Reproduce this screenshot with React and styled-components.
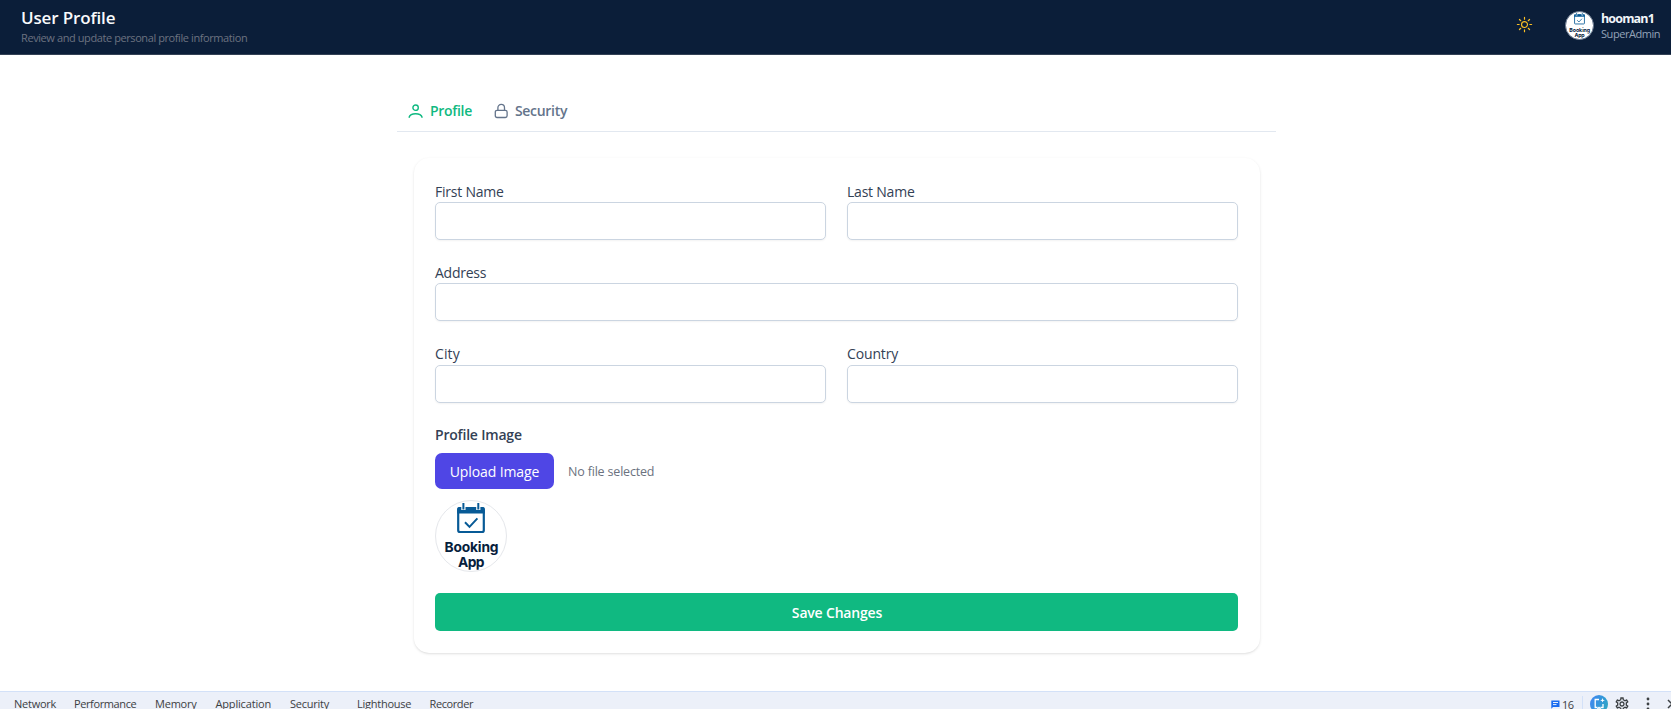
import React from "react";
import styled, { createGlobalStyle } from "styled-components";
import { HiOutlineSun } from "react-icons/hi2";
import { MdOutlineSettings } from "react-icons/md";

const GlobalStyle = createGlobalStyle`
  *, *::before, *::after { box-sizing: border-box; }
  body {
    margin: 0;
    background: #fff;
    font-family: "Open Sans", "Noto Sans", sans-serif;
    overflow: hidden;
  }
  svg { display: block; flex-shrink: 0; }
`;

const Page = styled.div`
  display: flex;
  flex-direction: column;
  height: 709px;
  overflow: hidden;
`;

const Header = styled.header`
  display: flex;
  justify-content: space-between;
  flex: 0 0 55px;
  padding: 0 11px 0 21px;
  background: #0b1e39;
  border-bottom: 1px solid #334155;
`;

const Heading = styled.div`
  padding-top: 6px;
`;

const Title = styled.h1`
  margin: 0;
  font-size: 17px;
  font-weight: 600;
  line-height: 24px;
  letter-spacing: -0.14px;
  color: #f8fafc;
`;

const Subtitle = styled.p`
  margin: 0;
  font-size: 11px;
  line-height: 16px;
  letter-spacing: -0.41px;
  color: #6b7280;
`;

const HeaderActions = styled.div`
  display: flex;
  align-items: flex-start;
`;

const ThemeToggle = styled.button`
  display: flex;
  margin: 15px 31px 0 0;
  padding: 0;
  border: 0;
  background: none;
  color: #fbbf24;
`;

const Avatar = styled.div`
  width: ${(p) => p.$size}px;
  height: ${(p) => p.$size}px;
  flex-shrink: 0;
  border: 1px solid ${(p) => p.$border};
  border-radius: 50%;
  background: #fff;
  overflow: hidden;
`;

const HeaderAvatar = styled(Avatar)`
  margin: 11px 7px 0 0;
`;

const UserInfo = styled.div`
  width: 59px;
  padding-top: 11px;
  white-space: nowrap;
`;

const UserName = styled.div`
  font-size: 12.5px;
  font-weight: 700;
  line-height: 16px;
  letter-spacing: -0.85px;
  color: #f1f5f9;
`;

const UserRole = styled.div`
  font-size: 11px;
  line-height: 14px;
  letter-spacing: -0.45px;
  color: #94a3b8;
`;

const Main = styled.main`
  flex: 1 1 0;
  min-height: 0;
  padding: 38px 0 0 397px;
`;

const Tabs = styled.nav`
  display: flex;
  align-items: flex-start;
  gap: 22px;
  width: 879px;
  height: 39px;
  padding: 7px 0 0 11px;
  border-bottom: 1px solid #e2e8f0;
`;

const Tab = styled.button`
  display: flex;
  align-items: center;
  gap: 6px;
  height: 22px;
  padding: 0;
  border: 0;
  background: none;
  font: 600 14px/22px "Open Sans", sans-serif;
  letter-spacing: -0.31px;
  color: ${(p) => (p.$active ? "#10b981" : "#64748b")};
`;

const Card = styled.form`
  width: 846px;
  height: 495px;
  margin: 26px 0 0 17px;
  padding: 23.75px 22px 22px 21px;
  border-radius: 15px;
  background: #fff;
  box-shadow: 0 1px 3px rgba(0, 0, 0, 0.1), 0 1px 2px -1px rgba(0, 0, 0, 0.1);
`;

const FieldGrid = styled.div`
  display: grid;
  grid-template-columns: 1fr 1fr;
  column-gap: 21px;
  row-gap: 22.85px;
`;

const Field = styled.label`
  display: flex;
  flex-direction: column;
  grid-column: ${(p) => (p.$wide ? "1 / -1" : "auto")};
  font-size: 14px;
  line-height: 20.4px;
  letter-spacing: ${(p) => p.$tracking}px;
  color: #334155;
`;

const Input = styled.input`
  width: 100%;
  height: 38px;
  padding: 0 12px;
  border: 1px solid #cbd5e1;
  border-radius: 5px;
  background: #fff;
  box-shadow: 0 1px 2px rgba(0, 0, 0, 0.05);
  outline: none;
`;

const GroupLabel = styled.div`
  margin-top: 22.35px;
  font-size: 14px;
  font-weight: 600;
  line-height: 20px;
  letter-spacing: -0.2px;
  color: #334155;
`;

const UploadRow = styled.div`
  display: flex;
  align-items: center;
  gap: 14px;
  margin-top: 8px;
`;

const UploadButton = styled.button`
  width: 119px;
  height: 36px;
  padding: 1px 0 0;
  border: 0;
  border-radius: 7px;
  background: #4f46e5;
  color: #fff;
  font: 500 14px/20px "Open Sans", sans-serif;
  letter-spacing: -0.1px;
`;

const FileStatus = styled.span`
  padding-top: 1px;
  font-size: 12.5px;
  line-height: 18px;
  letter-spacing: -0.18px;
  color: #6b7280;
`;

const ProfileAvatar = styled(Avatar)`
  margin-top: 11px;
`;

const SaveButton = styled.button`
  display: block;
  width: 100%;
  height: 38px;
  margin-top: 21px;
  padding: 2px 0 0 1px;
  border: 0;
  border-radius: 5px;
  background: #10b981;
  color: #fff;
  font: 600 14px/20px "Open Sans", sans-serif;
  letter-spacing: -0.18px;
`;

const DevBar = styled.footer`
  display: flex;
  justify-content: space-between;
  flex: 0 0 18px;
  padding-left: 14px;
  border-top: 1px solid #d3e1f8;
  background: #ecf0f9;
  overflow: hidden;
`;

const DevTabs = styled.div`
  display: flex;
  padding-top: 6px;
`;

const DevTab = styled.span`
  width: ${(p) => p.$slot}px;
  height: 11px;
  font-size: 11px;
  line-height: 11px;
  letter-spacing: ${(p) => p.$tracking}px;
  white-space: nowrap;
  color: #3c4043;
`;

const DevTools = styled.div`
  display: flex;
  align-items: center;
  width: 120px;
  height: 24px;

  > * {
    flex-shrink: 0;
  }
`;

const IssueCount = styled.span`
  width: 20px;
  margin-left: 2px;
  font-size: 11px;
  line-height: 11px;
  letter-spacing: -0.5px;
  color: #3c4043;
`;

const Divider = styled.span`
  width: 1px;
  height: 16px;
  margin-right: 7px;
  background: #d3e1f8;
`;

const AiBadge = styled.span`
  display: flex;
  align-items: center;
  justify-content: center;
  width: 18px;
  height: 18px;
  margin-right: 5px;
  border-radius: 50%;
  background: linear-gradient(115deg, #4285f4, #2f9ed0 70%, #35a8b8);
`;

const ToolIcon = styled.span`
  display: flex;
  margin-left: ${(p) => p.$gap}px;
  color: #3c4043;
`;

const BookingLogo = () => (
  <svg width="100%" height="100%" viewBox="0 0 70 70" role="img" aria-label="Booking App">
    <rect x="22.2" y="7.2" width="25.6" height="23.8" rx="1.8" fill="#fff" stroke="#075a96" strokeWidth="2.2" />
    <path d="M21.2 12.5V8a2 2 0 0 1 2-2h23.6a2 2 0 0 1 2 2v4.5z" fill="#075a96" />
    <path d="M27.4 1.5v7.5M42.3 1.5v7.5" stroke="#fff" strokeWidth="4.2" />
    <path d="M27.4 2v6.4M42.3 2v6.4" stroke="#075a96" strokeWidth="2" />
    <path d="M29 21.3l4.5 4.6 7.9-8.5" fill="none" stroke="#075a96" strokeWidth="2" />
    <text x="35.5" y="50.6" textAnchor="middle" textLength="54" fontFamily="Inter, sans-serif" fontSize="13.8" fontWeight="700" fill="#06203c">Booking</text>
    <text x="35.2" y="66" textAnchor="middle" textLength="26.6" fontFamily="Inter, sans-serif" fontSize="13.8" fontWeight="700" fill="#06203c">App</text>
  </svg>
);

const UserIcon = () => (
  <svg width="16" height="16" viewBox="0 0 16 16" fill="none" stroke="currentColor" strokeWidth="1.4" strokeLinecap="round">
    <circle cx="7.6" cy="4.7" r="2.7" />
    <path d="M1.1 14.2C1.8 11.8 4.4 10.7 7.6 10.7s5.8 1.1 6.5 3.5" />
  </svg>
);

const LockIcon = () => (
  <svg width="15" height="16" viewBox="0 0 15 16" fill="none" stroke="currentColor" strokeWidth="1.3">
    <rect x="1.3" y="7.3" width="11.8" height="7.2" rx="1.7" />
    <path d="M3.9 7.3V4.7a3.3 3.3 0 0 1 6.6 0V7.3" />
  </svg>
);

const IssueIcon = () => (
  <svg width="9" height="9" viewBox="0 0 9 9">
    <path d="M.3.5h8.2v6.5H2L.3 8.7z" fill="#1a6cf0" />
    <path d="M2 2.5h5M2 4.6h3.5" stroke="#fff" strokeWidth=".9" />
  </svg>
);

const AiIcon = () => (
  <svg width="14" height="14" viewBox="0 0 14 14" fill="none" stroke="#fff" strokeWidth="1.3">
    <path d="M7 2.5H3.2v8h2.300M11 7v3.500H8.500M5.500 12l1.500-1.500L8.500 12" />
    <path d="M10.500 1l.6 1.700 1.700.6-1.700.6-.6 1.700-.6-1.700-1.700-.6 1.700-.6z" fill="#fff" stroke="none" />
  </svg>
);

const MoreIcon = () => (
  <svg width="4" height="14" viewBox="0 0 4 14" fill="currentColor">
    <circle cx="2" cy="2" r="1.4" />
    <circle cx="2" cy="7" r="1.4" />
    <circle cx="2" cy="12" r="1.4" />
  </svg>
);

const CloseIcon = () => (
  <svg width="10" height="10" viewBox="0 0 10 10" stroke="currentColor" strokeWidth="1.5">
    <path d="M1 1l8 8M9 1L1 9" />
  </svg>
);

const fields = [
  { label: "First Name", tracking: -0.22 },
  { label: "Last Name", tracking: -0.22 },
  { label: "Address", tracking: -0.25, wide: true },
  { label: "City", tracking: 0.1 },
  { label: "Country", tracking: -0.15 },
];

const devTabs = [
  { label: "Network", slot: 60, tracking: -0.25 },
  { label: "Performance", slot: 81, tracking: -0.39 },
  { label: "Memory", slot: 60.5, tracking: -0.22 },
  { label: "Application", slot: 74.5, tracking: -0.17 },
  { label: "Security", slot: 67, tracking: -0.24 },
  { label: "Lighthouse", slot: 72.5, tracking: -0.25 },
  { label: "Recorder", slot: 60, tracking: -0.4 },
];

export default function App() {
  return (
    <Page>
      <GlobalStyle />
      <Header>
        <Heading>
          <Title>User Profile</Title>
          <Subtitle>Review and update personal profile information</Subtitle>
        </Heading>
        <HeaderActions>
          <ThemeToggle type="button" aria-label="Toggle theme">
            <HiOutlineSun size={19} />
          </ThemeToggle>
          <HeaderAvatar $size={29} $border="#64748b">
            <BookingLogo />
          </HeaderAvatar>
          <UserInfo>
            <UserName>hooman1</UserName>
            <UserRole>SuperAdmin</UserRole>
          </UserInfo>
        </HeaderActions>
      </Header>
      <Main>
        <Tabs>
          <Tab type="button" $active>
            <UserIcon />
            Profile
          </Tab>
          <Tab type="button">
            <LockIcon />
            Security
          </Tab>
        </Tabs>
        <Card>
          <FieldGrid>
            {fields.map((f) => (
              <Field key={f.label} $wide={f.wide} $tracking={f.tracking}>
                {f.label}
                <Input />
              </Field>
            ))}
          </FieldGrid>
          <GroupLabel>Profile Image</GroupLabel>
          <UploadRow>
            <UploadButton type="button">Upload Image</UploadButton>
            <FileStatus>No file selected</FileStatus>
          </UploadRow>
          <ProfileAvatar $size={72} $border="#e5e7eb">
            <BookingLogo />
          </ProfileAvatar>
          <SaveButton type="button">Save Changes</SaveButton>
        </Card>
      </Main>
      <DevBar>
        <DevTabs>
          {devTabs.map((t) => (
            <DevTab key={t.label} $slot={t.slot} $tracking={t.tracking}>
              {t.label}
            </DevTab>
          ))}
        </DevTabs>
        <DevTools>
          <IssueIcon />
          <IssueCount>16</IssueCount>
          <Divider />
          <AiBadge>
            <AiIcon />
          </AiBadge>
          <ToolIcon $gap={1}>
            <MdOutlineSettings size={16} />
          </ToolIcon>
          <ToolIcon $gap={16}>
            <MoreIcon />
          </ToolIcon>
          <ToolIcon $gap={17}>
            <CloseIcon />
          </ToolIcon>
        </DevTools>
      </DevBar>
    </Page>
  );
}
